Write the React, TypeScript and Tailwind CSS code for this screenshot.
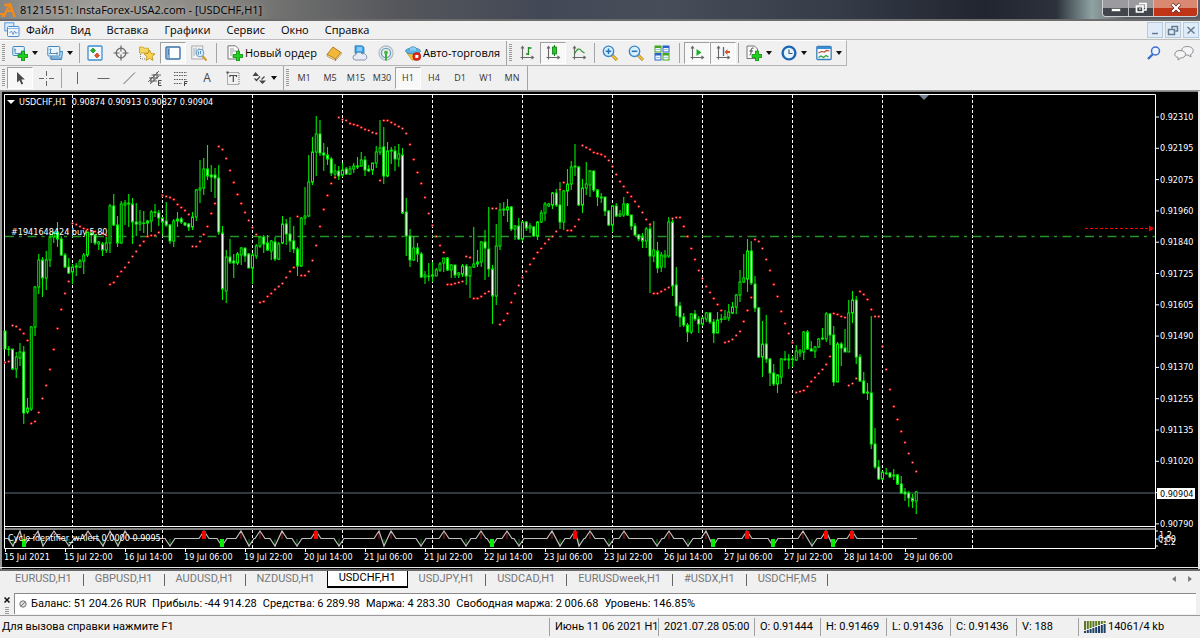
import React from "react";
import clsx from "clsx";

// [high, open, close, low] of every hourly bar, in chart units (y grows downwards)
const BARS: number[][] = [
  [331, 331, 349, 349], [346, 349, 349, 356], [349, 349, 369, 370], [352, 369, 357, 378],
  [343, 358, 352, 366], [346, 352, 413, 424], [398, 412, 408, 414], [326, 409, 327, 411],
  [286, 327, 287, 336], [254, 287, 260, 294], [257, 260, 278, 297], [251, 278, 260, 290],
  [233, 260, 237, 267], [231, 237, 233, 243], [222, 232, 239, 247], [236, 239, 255, 256],
  [253, 255, 267, 268], [258, 267, 273, 274], [264, 272, 267, 284], [263, 267, 266, 276],
  [259, 267, 261, 268], [253, 261, 255, 274], [232, 255, 232, 257], [230, 232, 235, 243],
  [234, 235, 243, 245], [241, 244, 242, 250], [242, 244, 250, 256], [237, 250, 243, 253],
  [204, 243, 206, 253], [194, 206, 225, 226], [216, 225, 243, 247], [201, 243, 204, 244],
  [200, 205, 203, 225], [194, 203, 204, 227], [198, 204, 222, 244], [203, 222, 224, 236],
  [210, 224, 222, 231], [211, 223, 223, 233], [220, 223, 221, 237], [210, 221, 212, 232],
  [204, 212, 212, 217], [210, 213, 218, 226], [217, 218, 222, 235], [202, 221, 225, 227],
  [224, 225, 241, 244], [219, 241, 221, 247], [212, 221, 219, 227], [217, 219, 222, 224],
  [222, 223, 225, 226], [223, 224, 227, 231], [212, 227, 217, 230], [189, 217, 190, 221],
  [160, 190, 188, 203], [158, 188, 169, 195], [145, 169, 176, 180], [165, 175, 177, 192],
  [168, 175, 178, 198], [165, 178, 232, 235], [226, 233, 289, 300], [250, 291, 257, 303],
  [239, 257, 262, 264], [254, 261, 263, 278], [252, 263, 254, 265], [247, 255, 248, 265],
  [248, 248, 256, 262], [253, 254, 268, 268], [253, 268, 255, 284], [244, 256, 246, 259],
  [237, 246, 237, 248], [235, 237, 244, 253], [235, 243, 250, 251], [240, 251, 241, 260],
  [237, 242, 259, 261], [242, 259, 244, 260], [216, 243, 224, 244], [219, 224, 234, 245],
  [217, 234, 241, 252], [226, 241, 249, 253], [247, 249, 266, 276], [217, 266, 218, 267],
  [187, 218, 216, 225], [155, 216, 182, 217], [137, 182, 152, 185], [116, 152, 134, 176],
  [120, 134, 153, 156], [143, 153, 155, 171], [147, 155, 159, 165], [157, 159, 173, 176],
  [164, 174, 171, 177], [166, 171, 176, 180], [163, 175, 170, 177], [167, 169, 174, 175],
  [166, 174, 169, 175], [163, 169, 166, 173], [157, 167, 166, 169], [152, 166, 160, 167],
  [156, 160, 170, 176], [165, 169, 171, 172], [163, 170, 163, 175], [146, 163, 152, 168],
  [120, 152, 148, 155], [127, 147, 176, 184], [142, 176, 151, 177], [147, 151, 150, 164],
  [146, 151, 159, 171], [144, 159, 154, 167], [148, 155, 213, 214], [198, 212, 236, 256],
  [229, 236, 260, 267], [236, 260, 248, 261], [243, 248, 254, 262], [252, 254, 277, 278],
  [271, 277, 275, 284], [263, 276, 276, 281], [262, 276, 275, 282], [268, 276, 270, 276],
  [262, 270, 264, 272], [258, 263, 258, 272], [257, 258, 270, 271], [264, 270, 265, 278],
  [265, 265, 275, 278], [272, 275, 273, 278], [264, 274, 266, 277], [264, 266, 276, 285],
  [267, 276, 267, 298], [227, 267, 264, 268], [250, 264, 262, 267], [241, 262, 242, 267],
  [230, 242, 248, 280], [207, 249, 269, 277], [265, 269, 296, 324], [224, 296, 246, 305],
  [203, 246, 210, 250], [202, 210, 209, 216], [199, 210, 207, 222], [206, 207, 229, 231],
  [225, 229, 226, 240], [218, 226, 239, 240], [221, 239, 222, 241], [221, 222, 228, 231],
  [223, 228, 226, 233], [226, 227, 236, 237], [221, 236, 222, 240], [210, 222, 213, 223],
  [202, 213, 204, 221], [203, 206, 204, 207], [192, 205, 193, 209], [189, 193, 205, 207],
  [182, 205, 222, 229], [190, 222, 191, 230], [169, 191, 184, 206], [161, 184, 167, 190],
  [144, 167, 166, 176], [166, 167, 205, 206], [179, 205, 188, 213], [162, 188, 184, 195],
  [170, 185, 171, 197], [171, 171, 190, 192], [189, 190, 197, 206], [193, 198, 197, 203],
  [197, 197, 211, 216], [210, 211, 225, 226], [205, 225, 206, 232], [203, 206, 216, 217],
  [210, 216, 214, 217], [197, 215, 204, 217], [203, 204, 215, 216], [215, 215, 226, 230],
  [223, 226, 235, 236], [234, 235, 239, 241], [233, 237, 241, 248], [227, 241, 229, 248],
  [223, 229, 256, 293], [221, 256, 250, 262], [242, 251, 268, 273], [252, 267, 255, 272],
  [250, 257, 255, 268], [217, 256, 222, 258], [218, 222, 286, 296], [267, 285, 306, 316],
  [302, 306, 317, 327], [313, 317, 325, 327], [323, 325, 332, 342], [313, 332, 314, 334],
  [310, 314, 319, 321], [316, 319, 324, 333], [317, 324, 318, 326], [312, 319, 313, 322],
  [312, 313, 322, 324], [319, 322, 333, 343], [312, 333, 320, 333], [314, 319, 319, 323],
  [310, 319, 317, 320], [304, 318, 312, 321], [302, 313, 307, 314], [294, 307, 295, 314],
  [270, 295, 282, 302], [254, 282, 278, 283], [239, 279, 251, 292], [241, 251, 283, 285],
  [276, 284, 308, 312], [307, 308, 357, 358], [321, 357, 344, 377], [315, 344, 359, 363],
  [358, 359, 373, 386], [364, 373, 384, 386], [374, 384, 375, 393], [358, 377, 359, 384],
  [351, 359, 359, 361], [354, 360, 359, 369], [356, 359, 359, 367], [345, 360, 351, 361],
  [349, 353, 351, 357], [331, 352, 332, 360], [330, 332, 349, 350], [341, 349, 351, 351],
  [346, 351, 347, 358], [338, 347, 339, 348], [328, 339, 338, 340], [312, 339, 314, 342],
  [313, 314, 335, 345], [326, 335, 382, 386], [342, 382, 344, 382], [342, 344, 348, 366],
  [329, 348, 352, 352], [300, 352, 313, 352], [291, 313, 300, 323], [296, 300, 357, 364],
  [354, 357, 381, 382], [372, 381, 393, 394], [383, 392, 393, 400], [316, 393, 444, 449],
  [428, 444, 467, 469], [460, 467, 479, 480], [471, 479, 472, 480], [468, 473, 473, 475],
  [472, 473, 477, 478], [469, 476, 475, 480], [474, 475, 484, 485], [476, 484, 493, 494],
  [488, 492, 494, 501], [491, 493, 498, 507], [494, 498, 501, 508], [491, 501, 492, 514],
];

// Parabolic SAR, one dot for each bar
const SAR = [
  362, 361, 325, 326, 329, 333, 340, 423, 421, 412, 398, 385, 369, 349, 328, 309, 293, 281,
  223, 224, 226, 228, 229, 231, 231, 232, 233, 235, 284, 282, 276, 271, 267, 262, 256, 251,
  245, 241, 236, 235, 235, 232, 195, 196, 197, 199, 204, 207, 210, 214, 246, 246, 241, 234,
  226, 213, 203, 146, 149, 158, 170, 182, 194, 203, 212, 220, 227, 234, 302, 301, 296, 293,
  289, 286, 283, 277, 271, 267, 216, 275, 275, 271, 260, 245, 226, 209, 195, 183, 177, 117,
  119, 120, 123, 124, 125, 127, 129, 130, 132, 133, 180, 120, 120, 122, 124, 126, 128, 133,
  144, 159, 172, 183, 197, 213, 225, 236, 245, 252, 284, 284, 283, 282, 281, 256, 257, 298,
  298, 296, 293, 291, 208, 208, 324, 320, 313, 302, 293, 285, 277, 271, 264, 258, 252, 248,
  243, 239, 236, 231, 189, 182, 230, 230, 226, 219, 145, 147, 149, 152, 153, 154, 156, 160,
  166, 174, 181, 186, 192, 196, 201, 206, 212, 219, 224, 293, 293, 291, 289, 287, 218, 217,
  217, 226, 236, 248, 259, 270, 278, 286, 292, 298, 304, 310, 342, 341, 339, 335, 331, 321,
  310, 297, 239, 241, 248, 259, 270, 284, 296, 311, 323, 333, 342, 392, 391, 390, 386, 381,
  377, 373, 369, 364, 356, 313, 314, 316, 317, 385, 383, 378, 291, 294, 299, 309, 316, 316,
  346, 369, 389, 406, 419, 431, 442, 453, 462, 471,
];

// Cycle identifier peaks: x, direction (1 up, -1 down), strong signal
const CYCLES: [number, number, boolean][] = [
  [13, -1, false], [20, 1, false], [24, -1, true], [38, 1, false], [43, -1, false],
  [54, 1, false], [69, -1, false], [88, 1, false], [103, -1, false], [110, 1, false],
  [118, -1, false], [125, 1, false], [170, -1, false], [204, 1, true], [222, -1, true],
  [241, 1, false], [249, -1, false], [260, 1, false], [275, -1, false], [282, 1, false],
  [297, -1, false], [316, 1, true], [339, -1, false], [379, 1, false], [384, -1, false],
  [391, 1, false], [421, -1, false], [444, 1, false], [466, -1, false], [481, 1, false],
  [492, -1, true], [507, 1, false], [519, -1, false], [552, 1, false], [560, -1, false],
  [575, 1, true], [579, -1, false], [590, 1, false], [609, -1, false], [624, 1, false],
  [657, -1, false], [669, 1, false], [688, -1, false], [706, 1, false], [713, -1, true],
  [747, 1, true], [773, -1, true], [803, 1, false], [812, -1, false], [826, 1, true],
  [833, -1, true], [852, 1, true],
];

const PRICES = [
  "0.92310", "0.92195", "0.92075", "0.91960", "0.91840", "0.91725", "0.91605",
  "0.91490", "0.91370", "0.91255", "0.91135", "0.91020", "", "0.90790",
];

const TIMES = [
  "15 Jul 2021", "15 Jul 22:00", "16 Jul 14:00", "19 Jul 06:00", "19 Jul 22:00", "20 Jul 14:00",
  "21 Jul 06:00", "21 Jul 22:00", "22 Jul 14:00", "23 Jul 06:00", "23 Jul 22:00", "26 Jul 14:00",
  "27 Jul 06:00", "27 Jul 22:00", "28 Jul 14:00", "29 Jul 06:00",
];

const MENU = ["Файл", "Вид", "Вставка", "Графики", "Сервис", "Окно", "Справка"];
const PERIODS = ["M1", "M5", "M15", "M30", "H1", "H4", "D1", "W1", "MN"];
const TABS = [
  "EURUSD,H1", "GBPUSD,H1", "AUDUSD,H1", "NZDUSD,H1", "USDCHF,H1", "USDJPY,H1",
  "USDCAD,H1", "EURUSDweek,H1", "#USDX,H1", "USDCHF,M5",
];

const barX = (i: number) => 5 + i * 3.75;

/* ---------- icons ---------- */

const Icon = ({ children, size = "size-4" }: { children: React.ReactNode; size?: string }) => (
  <svg viewBox="0 0 16 16" className={clsx(size, "shrink-0")} fill="none" aria-hidden="true">
    {children}
  </svg>
);

const Plus = () => (
  <path d="M9.500 6h3v3.500h3.500v3h-3.500V16h-3v-3.500H6v-3h3.500z" fill="#1fd01f" stroke="#0c8a0c" strokeWidth=".8" />
);

const NewChartIcon = () => (
  <Icon>
    <rect x=".8" y="1.500" width="11.500" height="9" rx="1" fill="#eaf4fc" stroke="#3e86bd" />
    <path d="M3 3.500v5M2 5h2M3 8.500h7M9 7v2.500" stroke="#5a8fb8" />
    <Plus />
  </Icon>
);
const ProfilesIcon = () => (
  <Icon>
    <path d="M4 11v3.500h10.500l1-8H13" fill="#b9dcf2" stroke="#3e86bd" />
    <rect x=".8" y="1.500" width="12" height="9.500" rx="1" fill="#eaf4fc" stroke="#3e86bd" />
    <path d="M3.500 3.500v5M2.500 4.500h2M2 8.500h9M10 7v3" stroke="#5a8fb8" />
    <path d="M2.500 13h12" stroke="#3e86bd" />
  </Icon>
);
const MarketWatchIcon = () => (
  <Icon>
    <rect x="1" y="1" width="14" height="14" rx="1" fill="#f3f9fe" stroke="#3d8fd1" strokeWidth="1.300" />
    <path d="M6 3l2.500 2.500L6 8 3.500 5.500z" fill="#22b422" stroke="#0b7a0b" strokeWidth=".6" />
    <path d="M10 8l2.500 2.500L10 13l-2.500-2.500z" fill="#e8532a" stroke="#a82c10" strokeWidth=".6" />
  </Icon>
);
const TargetIcon = () => (
  <Icon>
    <circle cx="8" cy="8" r="4.800" stroke="#666" strokeWidth="1.300" />
    <path d="M8 .5v6M8 9.500v6M.5 8h6M9.500 8h6" stroke="#666" strokeWidth="1.200" />
  </Icon>
);
const FolderStarIcon = () => (
  <Icon>
    <path d="M.5 2h3.500l1 1.200h4.500V8h-9z" fill="#f5d766" stroke="#c79a1c" strokeWidth=".8" />
    <path d="M1.500 9v5M3 14h3" stroke="#777" strokeDasharray="1 1" />
    <path d="M10.500 5l1.600 3.500 3.900.4-2.900 2.600.9 3.900-3.500-2-3.500 2 .9-3.900L5 8.900l3.900-.4z" fill="#fbd44c" stroke="#b98a10" strokeWidth=".8" />
  </Icon>
);
const NavigatorIcon = () => (
  <Icon>
    <rect x="1" y="2" width="14" height="12" rx="1" fill="#fbfdff" stroke="#3a6fa5" strokeWidth="1.400" />
    <rect x="2" y="3" width="3" height="10" fill="#7db7e6" />
    <path d="M3 5h1M3 7h1M3 9h1" stroke="#1d4f80" />
  </Icon>
);
const TesterIcon = () => (
  <Icon>
    <rect x=".8" y="1" width="11" height="13" fill="#f3f3f3" stroke="#999" strokeWidth=".8" />
    <path d="M3 3v8M5 2.500v7M8 3v3" stroke="#88a4bd" strokeWidth=".8" />
    <path d="M11.500 11l4 4.500" stroke="#d49a1e" strokeWidth="2" />
    <circle cx="9" cy="8" r="3.800" fill="#d3ebfb" stroke="#6a9bc2" />
    <path d="M7.500 6.500v3M9.500 6v3" stroke="#4678a4" strokeWidth=".8" />
  </Icon>
);
const NewOrderIcon = () => (
  <Icon>
    <path d="M1 .8h7.500l3 3V14H1z" fill="#fafafa" stroke="#777" />
    <path d="M3 4h4M3 6h6M3 8h3M3 10h2" stroke="#888" strokeWidth=".8" />
    <Plus />
  </Icon>
);
const BookIcon = () => (
  <Icon>
    <path d="M1 9.500L7 2l8 5.500-5.500 6.500z" fill="#f0b93a" stroke="#a46a0c" strokeWidth=".8" />
    <path d="M1 9.500l.5 2 8 4V14z M9.500 14v1.500L15 9.500v-2z" fill="#fff1c4" stroke="#a46a0c" strokeWidth=".6" />
  </Icon>
);
const CloudIcon = () => (
  <Icon>
    <path d="M3 .8h7l2 1.500v6H3z" fill="#3aa5ec" stroke="#1c74b4" strokeWidth=".7" />
    <path d="M5 3h5M5 5h5" stroke="#d8efff" />
    <path d="M3.500 15a2.500 2.500 0 010-5 3.500 3.500 0 016.500-1 2.800 2.800 0 013 6z" fill="#e6ebf4" stroke="#7d8aa5" strokeWidth=".9" />
  </Icon>
);
const SignalIcon = () => (
  <Icon>
    <circle cx="8" cy="8" r="7" stroke="#b0c0c8" strokeWidth="1.300" />
    <circle cx="8" cy="8" r="4.600" stroke="#6aa0b4" strokeWidth="1.400" />
    <circle cx="8" cy="7.500" r="2" fill="#4ab84a" />
    <path d="M7 8.500h2v7H7z" fill="#3cae3c" />
  </Icon>
);
const AutoTradingIcon = () => (
  <Icon>
    <path d="M2 8l5 7h4l3.500-7z" fill="#f0c43e" stroke="#b78413" strokeWidth=".7" />
    <ellipse cx="8" cy="6" rx="7.500" ry="3" fill="#5fb4e4" stroke="#2d82b5" strokeWidth=".7" />
    <path d="M4 5.500C4 .5 12 .5 12 5.500" fill="#8bd0f2" stroke="#2d82b5" strokeWidth=".7" />
    <circle cx="11.800" cy="11.500" r="4" fill="#e02818" stroke="#a51409" strokeWidth=".6" />
    <rect x="10.300" y="10" width="3" height="3" fill="#fff" />
  </Icon>
);

const Axes = () => (
  <path d="M3.500 1.500v13M1.500 12.500h13M2 3.500l1.500-2 1.500 2M12.500 11l2 1.500-2 1.500" stroke="#6a6a6a" strokeWidth="1.100" />
);
const BarsIcon = () => (
  <Icon><Axes /><path d="M9.500 2v8M9.500 3h3M7 9h2.500" stroke="#1f8a1f" strokeWidth="1.300" /></Icon>
);
const CandlesIcon = () => (
  <Icon><Axes /><path d="M9.500 0v11" stroke="#0b7d0b" /><rect x="7.500" y="2" width="4" height="7" fill="#27c827" stroke="#0b7d0b" strokeWidth=".8" /></Icon>
);
const LineIcon = () => (
  <Icon><Axes /><path d="M3.500 9C6 3 9 3 10.500 6l3 2" stroke="#2f9a2f" strokeWidth="1.100" /></Icon>
);
const Magnifier = ({ plus }: { plus?: boolean }) => (
  <Icon>
    <path d="M10 10l5 5" stroke="#a8780d" strokeWidth="3" />
    <path d="M10 10l5 5" stroke="#f4cf45" strokeWidth="1.600" />
    <circle cx="6.500" cy="6.300" r="5.200" fill="#d9f0fe" stroke="#3b86c9" strokeWidth="1.400" />
    <path d="M3.700 6.300h5.600" stroke="#2472b8" strokeWidth="1.500" />
    {plus && <path d="M6.500 3.500v5.600" stroke="#2472b8" strokeWidth="1.500" />}
  </Icon>
);
const TileIcon = () => (
  <Icon>
    <path d="M.5.5h7v7h-7zM8.500 8h7v7.500h-7z" fill="#44a81b" />
    <path d="M8.500.5h7v7h-7zM.5 8h7v7.500h-7z" fill="#2a64c9" />
    <path d="M1.500 3h5v3.500h-5zM9.500 3h5v3.500h-5zM1.500 10.500h5v4h-5zM9.500 10.500h5v4h-5z" fill="#f2f8ff" />
    <path d="M2 4.500h4M10 4.500h4M2 12.500h4M10 12.500h4" stroke="#9fc3e8" />
  </Icon>
);
const ScrollIcon = () => (
  <Icon><Axes /><path d="M7.500 4v7l5-3.500z" fill="#1fae2b" /></Icon>
);
const ShiftIcon = () => (
  <Icon><Axes /><path d="M8.500 2v9" stroke="#2f6da3" strokeWidth="1.300" /><path d="M9.500 7l3-3v2H15v2h-2.500v2z" fill="#d4552b" /></Icon>
);
const IndicatorIcon = () => (
  <Icon>
    <path d="M1 1h7.500l3 3v9.500H1z" fill="#fafafa" stroke="#777" />
    <path d="M7.500 3C5 2.500 5 5 5 7s0 3-1.500 3M3.500 6H7" stroke="#444" />
    <Plus />
  </Icon>
);
const ClockIcon = () => (
  <Icon>
    <circle cx="8" cy="8" r="6.400" fill="#e8f4fd" stroke="#1d66b5" strokeWidth="2.400" />
    <path d="M8 4.500V8.500h3.500" stroke="#38597a" strokeWidth="1.100" />
  </Icon>
);
const TemplateIcon = () => (
  <Icon>
    <rect x=".8" y="1.500" width="14.400" height="13" rx="1" fill="#f6fafd" stroke="#3a7fbd" strokeWidth="1.300" />
    <path d="M1 3h14" stroke="#3a8fd6" strokeWidth="2" />
    <path d="M2.500 8l3-1.500 3 .5 2-1.500 3 .5" stroke="#c4472a" strokeWidth="1.200" />
    <path d="M2.500 12.500l2.500-1.500 2.500 1.500 2.500-2 2.500 1.500" stroke="#2c9c3a" strokeWidth="1.200" />
  </Icon>
);

const CursorIcon = () => (
  <Icon><path d="M5 2v10.500l2.500-2.300 1.900 4.300 1.800-.8-1.900-4.100h3.500z" fill="#4a4a4a" /></Icon>
);
const CrosshairIcon = () => (
  <Icon><path d="M8.500 1v5M8.500 11v5M1 8.500h5M11 8.500h5M8 8.500h1" stroke="#666" /></Icon>
);
const VLineIcon = () => <Icon><path d="M8.500 2v12" stroke="#666" /></Icon>;
const HLineIcon = () => <Icon><path d="M2.500 8.500h12" stroke="#666" /></Icon>;
const TrendIcon = () => <Icon><path d="M2.500 14L14 2.500" stroke="#666" /></Icon>;
const ChannelIcon = () => (
  <Icon>
    <path d="M1 12L12 1M3 14l9-8M2 8h9M4.500 5H14M3 11h7M4 7v6M7 4v7M10 2v6" stroke="#555" strokeWidth=".9" />
    <path d="M14.500 10.500h-3v5h3M11.500 13h2.500" stroke="#444" />
  </Icon>
);
const FiboIcon = () => (
  <Icon>
    <path d="M1 2.500h13M1 5.500h13M1 9.500h13M1 13.500h8" stroke="#555" strokeDasharray="1.500 1" />
    <path d="M14.500 11.500h-3v4.500M11.500 13.500h2.500" stroke="#444" />
  </Icon>
);
const LabelIcon = () => (
  <Icon>
    <rect x="2.500" y="2.500" width="11.500" height="12" stroke="#666" strokeDasharray="1 1" />
    <path d="M1.500 1.500h2v2h-2z" fill="#444" />
    <path d="M5 5.500h6.500M8.300 5.500V12M5 5v2M11.500 5v2" stroke="#4a4a4a" strokeWidth="1.200" />
  </Icon>
);
const ArrowsIcon = () => (
  <Icon>
    <path d="M4.500 2L8 6H1.500z M11.500 14L8 10.500h7z" fill="#444" />
    <path d="M3.500 8.500l2 2 3.500-4M10.500 9.500l3-3" stroke="#444" strokeWidth="1.200" />
  </Icon>
);

const Caret = () => (
  <svg viewBox="0 0 6 4" className="h-1 w-1.5 shrink-0" aria-hidden="true">
    <path d="M0 0h6L3 4z" fill="#111" />
  </svg>
);

/* ---------- toolbar parts ---------- */

type ToolProps = {
  label: string;
  pressed?: boolean;
  drop?: boolean;
  children: React.ReactNode;
};

const Tool = ({ label, pressed, drop, children }: ToolProps) => (
  <button
    type="button"
    aria-label={label}
    aria-pressed={pressed}
    className={clsx(
      "flex h-[22px] shrink-0 items-center justify-center border",
      drop ? "w-[35px] gap-1" : "w-[26px]",
      pressed ? "border-[#a0a0a0] border-r-white border-b-white bg-[#f8f8f8]" : "border-transparent"
    )}
  >
    {children}
    {drop && <Caret />}
  </button>
);

const Sep = () => <div className="mx-0.5 h-5 w-px shrink-0 bg-[#a5a5a5]" />;
const Grip = () => (
  <div className="mx-0.5 h-[18px] w-[3px] shrink-0 bg-[repeating-linear-gradient(to_bottom,#9a9a9a_0_1px,#f0f0f0_1px_2px)]" />
);

/* ---------- chart ---------- */

const cyclePath = () => {
  let d = "M5 538.500";
  CYCLES.forEach(([x, dir], i) => {
    const prev = i ? CYCLES[i - 1][0] : 0;
    const next = CYCLES[i + 1] ? CYCLES[i + 1][0] : 2000;
    if (x - prev > 9) d += `L${x - 5} 538.500`;
    d += `L${x} ${538.5 - dir * 7.5}`;
    if (next - x > 9) d += `L${x + 5} 538.500`;
  });
  return d + "L917 538.500";
};

const Chart = () => (
  <svg
    viewBox="0 91 1200 478"
    className="block w-full bg-black font-['DejaVu_Sans_Condensed','DejaVu_Sans',sans-serif] text-[9px]"
    role="img"
    aria-label="USDCHF,H1"
  >
    <rect x="0" y="91" width="1200" height="1" fill="#808080" />
    <rect x="0" y="91" width="2" height="478" fill="#9a9a9a" />
    <rect x="1198" y="91" width="2" height="478" fill="#e8e8e8" />

    {/* day separators */}
    {Array.from({ length: 11 }, (_, i) => (
      <path key={i} d={`M${72.5 + i * 90} 95V526M${72.5 + i * 90} 530V548`} stroke="#fff" strokeDasharray="3 2" />
    ))}

    {/* frames of the two panes */}
    <path d="M4.500 548.500V94.500H1155.500V548.500zM4.500 526.500H1155.500M4.500 529H1155.500" stroke="#fff" fill="none" />
    <path d="M919 95h10l-5 5z" fill="#708090" />

    {/* current price and open order */}
    <path d="M5 493H1155" stroke="#5f6f7e" />
    <path d="M5 236.500H1155" stroke="#249424" strokeWidth="1.300" strokeDasharray="9 5 3 5.500" />
    <path d="M1085 228.500H1150" stroke="#f00" strokeDasharray="3 2" />
    <path d="M1149 225.500l5 3-5 3z" fill="#f00" />

    {BARS.map(([high, open, close, low], i) => (
      <g key={i} stroke="#00f000">
        <path d={`M${barX(i)} ${high}V${low}`} strokeWidth="1.100" />
        <rect
          x={barX(i) - 1}
          y={Math.min(open, close)}
          width="2"
          height={Math.max(Math.abs(close - open), 0.5)}
          fill={close > open ? "#fff" : "#000"}
        />
      </g>
    ))}
    {SAR.map((y, i) => (
      <g key={i}>
        <circle cx={barX(i)} cy={y + 0.5} r="1.300" fill="#f01414" />
        <circle cx={barX(i)} cy={y + 0.5} r=".6" fill="#ffc0c0" />
      </g>
    ))}

    {/* cycle identifier */}
    {CYCLES.map(([x, dir, strong], i) => (
      <rect
        key={i}
        x={strong ? x - 2 : x - 0.5}
        y={dir > 0 ? 531 : 539}
        width={strong ? 4 : 1}
        height="8"
        fill={dir > 0 ? (strong ? "#f00" : "#a02020") : strong ? "#00f000" : "#0a7a0a"}
      />
    ))}
    <path d={cyclePath()} stroke="#c0c0c0" strokeWidth="1.200" fill="none" />
    {CYCLES.filter(([, , strong]) => strong).map(([x, dir]) => (
      <rect key={x} x={x - 2} y={dir > 0 ? 531 : 539} width="4" height="8" fill={dir > 0 ? "#f00" : "#00f000"} />
    ))}

    <path d="M7 100h8l-4 4z" fill="#fff" />
    <g fill="#fff">
      <text x="19" y="105">USDCHF,H1&nbsp; 0.90874 0.90913 0.90827 0.90904</text>
      <text x="11" y="235">#1941648424 buy 5.80</text>
      <text x="8" y="541">Cycle identifier_wAlert 0.0000 0.9095</text>
      {PRICES.map((price, i) => (
        <g key={i}>
          <path d={`M1156 ${117 + i * 31.3}h3`} stroke="#fff" />
          <text x="1160" y={120 + i * 31.3}>{price}</text>
        </g>
      ))}
      {TIMES.map((time, i) => (
        <g key={time}>
          <path d={`M${5.5 + i * 60} 549v3`} stroke="#fff" />
          <text x={4 + i * 60} y="560">{time}</text>
        </g>
      ))}
      <path d="M1156 531h2M1156 539h2M1156 546h2" stroke="#fff" />
      <text x="1159" y="538">1.2</text>
      <text x="1158" y="542">0.00</text>
      <text x="1160" y="545">-1.2</text>
    </g>
    <rect x="1157" y="488" width="38" height="11" fill="#fff" />
    <text x="1160" y="497" fill="#000">0.90904</text>
    <rect x="0" y="567" width="1200" height="1" fill="#e8e8e8" />
  </svg>
);

/* ---------- window parts ---------- */

const TitleBar = () => (
  <header className="flex h-[21px] items-start border-b-2 border-[#6c6c6c] bg-[linear-gradient(90deg,#858583_0%,#9f9d99_8%,#8d8a84_17%,#6e6f6e_24%,#55575c_33%,#424855_45%,#474d59_55%,#353b47_70%,#20252f_82%,#2c313b_88%,#8fa3a3_91%,#5a5d66_94%,#5a5d66_100%)] pr-0.5">
    <svg viewBox="0 0 16 18" className="h-[18px] w-4 shrink-0" aria-hidden="true">
      <path d="M1 17h4l2-5h5l1 5h3L11 3 4 4l1 3 3-1-4 7H0v2h2z" fill="#ef8a1d" />
      <path d="M8 9.500l1.500-3 1 3z" fill="#8b8985" />
    </svg>
    <h1 className="flex-1 pl-1 text-[11px] leading-[19px] text-black [text-shadow:0_0_6px_#fff8]">
      81215151: InstaForex-USA2.com - [USDCHF,H1]
    </h1>
    <div className="flex h-[17px] overflow-hidden rounded-b border border-t-0 border-[#d0d0d0] text-white">
      <button type="button" aria-label="Свернуть" className="flex w-[26px] items-center justify-center border-r border-[#c0c0c0] bg-linear-to-b from-[#9b9b9f] from-50% to-[#43454c] to-50%">
        <svg viewBox="0 0 12 12" className="size-3"><path d="M1.500 6.500h9v3h-9z" fill="#fff" stroke="#444" strokeWidth=".6" /></svg>
      </button>
      <button type="button" aria-label="Восстановить" className="flex w-[25px] items-center justify-center border-r border-[#c0c0c0] bg-linear-to-b from-[#9b9b9f] from-50% to-[#43454c] to-50%">
        <svg viewBox="0 0 12 12" className="size-3" fill="none"><path d="M4 1.500h7v6.500H9M1.500 4H8v6H1.500z" stroke="#fff" strokeWidth="1.700" /><path d="M4 6.500h2v1H4z" fill="#fff" /></svg>
      </button>
      <button type="button" aria-label="Закрыть" className="flex w-[43px] items-center justify-center bg-linear-to-b from-[#d98872] from-50% to-[#c03418] to-50%">
        <svg viewBox="0 0 12 12" className="size-3"><path d="M2 2l8 8M10 2l-8 8" stroke="#5a2014" strokeWidth="3.500" /><path d="M2.200 2.200l7.600 7.600M9.800 2.200L2.200 9.800" stroke="#fff" strokeWidth="2.300" /></svg>
      </button>
    </div>
  </header>
);

const MdiButton = ({ label, d }: { label: string; d: string }) => (
  <button type="button" aria-label={label} className="flex h-4 w-4 items-center justify-center border border-[#b5cbe0] bg-[#dfebf7]">
    <svg viewBox="0 0 12 12" className="size-3" fill="none"><path d={d} stroke="#667b90" strokeWidth="1.500" /></svg>
  </button>
);

const MenuBar = () => (
  <nav className="flex h-[19px] items-center border-b border-[#bdbdbd] bg-[#f0f0f0] pr-px pl-1 text-[11px]">
    <Icon>
      <rect x=".8" y=".8" width="9" height="8" fill="#dcebfb" stroke="#5b97d8" />
      <rect x="3.500" y="4.500" width="11.500" height="10" rx="1" fill="#eff6fe" stroke="#4c8ad0" />
      <path d="M4 6.500h11" stroke="#8ab6e8" />
      <path d="M5.500 11l2-2 1.500 3.500L10.500 9l1.500 2.500 1.500-1.500" stroke="#4c7fc0" strokeWidth=".8" />
    </Icon>
    <div className="flex flex-1 gap-2 pl-0.5">
      {MENU.map((item) => (
        <button key={item} type="button" className="px-1">{item}</button>
      ))}
    </div>
    <div className="flex gap-0.5">
      <MdiButton label="Свернуть окно" d="M3 9.500h6" />
      <MdiButton label="Восстановить окно" d="M5 4.500V2.500h5.500v4.500H8.500M1.500 5.500h6v5h-6z" />
      <MdiButton label="Закрыть окно" d="M2.500 3l7 6.500M9.500 3l-7 6.500" />
    </div>
  </nav>
);

const MainToolbar = () => (
  <div className="flex h-[26px] items-center justify-between bg-[#f0f0f0]">
    <div className="flex h-full items-center border-t border-r border-b border-[#b4b4b4] border-t-white text-[11px]">
      <Grip />
      <Tool label="Новый график" drop><NewChartIcon /></Tool>
      <Tool label="Профили" drop><ProfilesIcon /></Tool>
      <Sep />
      <Tool label="Обзор рынка"><MarketWatchIcon /></Tool>
      <Tool label="Окно данных"><TargetIcon /></Tool>
      <Tool label="Навигатор"><FolderStarIcon /></Tool>
      <Tool label="Терминал" pressed><NavigatorIcon /></Tool>
      <Tool label="Тестер стратегий"><TesterIcon /></Tool>
      <div className="px-0.5"><Sep /></div>
      <button type="button" className="flex items-center gap-0.5 pr-1 pl-1.5"><NewOrderIcon />Новый ордер</button>
      <Tool label="MetaEditor"><BookIcon /></Tool>
      <Tool label="Облако"><CloudIcon /></Tool>
      <Tool label="Сигналы"><SignalIcon /></Tool>
      <button type="button" className="flex items-center gap-0.5 px-1.5"><AutoTradingIcon />Авто-торговля</button>
      <div className="h-full w-px bg-[#a5a5a5]" />
      <Grip />
      <Tool label="Бары"><BarsIcon /></Tool>
      <Tool label="Свечи" pressed><CandlesIcon /></Tool>
      <Tool label="Линия"><LineIcon /></Tool>
      <Sep />
      <Tool label="Увеличить"><Magnifier plus /></Tool>
      <Tool label="Уменьшить"><Magnifier /></Tool>
      <Tool label="Расположить окна"><TileIcon /></Tool>
      <div className="px-0.5"><Sep /></div>
      <Tool label="Автопрокрутка" pressed><ScrollIcon /></Tool>
      <Tool label="Сдвиг графика" pressed><ShiftIcon /></Tool>
      <Sep />
      <Tool label="Индикаторы" drop><IndicatorIcon /></Tool>
      <Tool label="Периоды" drop><ClockIcon /></Tool>
      <Tool label="Шаблоны" drop><TemplateIcon /></Tool>
    </div>
    <div className="flex gap-3 pr-1.5">
      <button type="button" aria-label="Поиск">
        <Icon><path d="M2 14l5-5" stroke="#3c6fd0" strokeWidth="2.400" /><circle cx="9.500" cy="6" r="4" fill="#eef4ff" stroke="#3c6fd0" strokeWidth="1.500" /></Icon>
      </button>
      <button type="button" aria-label="Чат">
        <svg viewBox="0 0 20 16" className="h-4 w-5" fill="#f5f5f5" stroke="#8a8a94">
          <path d="M13 1.500c4 0 6.200 2 6.200 4.200S17.500 9 16.500 9.500l.5 2.500-3-2C9 10.500 7.500 8 7.500 6S9 1.500 13 1.500z" />
          <path d="M6 5.500c3.500 0 5.500 1.500 5.500 3.700S9.500 13 6.500 13l-2.500 2 .2-2.500C2 12 .8 11 .8 9.200S2.500 5.500 6 5.500z" />
        </svg>
      </button>
    </div>
  </div>
);

const DrawToolbar = () => (
  <div className="flex h-[25px] items-center border-b border-[#9a9a9a] bg-[#f0f0f0]">
    <div className="flex h-full items-center pr-0.5">
      <Grip />
      <Tool label="Курсор" pressed><CursorIcon /></Tool>
      <Tool label="Перекрестие"><CrosshairIcon /></Tool>
      <Sep />
      <Tool label="Вертикальная линия"><VLineIcon /></Tool>
      <Tool label="Горизонтальная линия"><HLineIcon /></Tool>
      <Tool label="Трендовая линия"><TrendIcon /></Tool>
      <Tool label="Канал"><ChannelIcon /></Tool>
      <Tool label="Фибоначчи"><FiboIcon /></Tool>
      <Tool label="Текст"><span className="text-xs text-[#444]">A</span></Tool>
      <Tool label="Метка"><LabelIcon /></Tool>
      <Tool label="Стрелки" drop><ArrowsIcon /></Tool>
    </div>
    <div className="flex h-full items-center border-x border-[#a5a5a5] pr-0.5 text-[9px] text-[#333]">
      <Grip />
      {PERIODS.map((p) => (
        <Tool key={p} label={p} pressed={p === "H1"}>{p}</Tool>
      ))}
    </div>
  </div>
);

const Tabs = () => (
  <div className="flex h-[20px] items-start justify-between border-t-2 border-[#6a6a6a] bg-[#f0f0f0] px-1 font-[Roboto,sans-serif] text-[11px] text-[#777]">
    <div role="tablist" className="flex items-center">
      {TABS.map((tab) => {
        const active = tab === "USDCHF,H1";
        return (
          <button
            key={tab}
            type="button"
            role="tab"
            aria-selected={active}
            className={clsx(
              "flex items-center border-r px-[11px]",
              active ? "h-[17px] border-b-2 border-l border-black bg-white px-2.5 text-black" : "h-3",
              !active && (tab === "NZDUSD,H1" ? "border-transparent" : "border-[#666]")
            )}
          >
            {tab}
          </button>
        );
      })}
    </div>
    <div className="flex h-4 items-center gap-3 pr-1">
      <button type="button" aria-label="Влево"><svg viewBox="0 0 5 8" className="h-1.5 w-1"><path d="M5 0v8L0 4z" fill="#777" /></svg></button>
      <button type="button" aria-label="Вправо"><svg viewBox="0 0 5 8" className="h-1.5 w-1"><path d="M0 0v8l5-4z" fill="#777" /></svg></button>
    </div>
  </div>
);

const Terminal = () => (
  <section className="flex h-[27px] items-start gap-1 border-b border-[#9a9a9a] bg-[#f0f0f0] pt-1 pr-1 pl-[3px] font-[Roboto,sans-serif]">
    <div className="flex w-[7px] flex-col items-center gap-1 pt-1">
      <button type="button" aria-label="Закрыть терминал" className="flex">
        <svg viewBox="0 0 6 6" className="size-1.5"><path d="M.5.5l5 5M5.500.5l-5 5" stroke="#111" strokeWidth="1.500" /></svg>
      </button>
      <div className="h-2 w-1 bg-[repeating-linear-gradient(to_bottom,#9a9a9a_0_1px,#f0f0f0_1px_2px)]" />
    </div>
    <div className="flex h-[21px] flex-1 items-center gap-1 border-t border-l border-[#8a8a8a] bg-white pl-1 text-[11px] whitespace-nowrap">
      <svg viewBox="0 0 8 8" className="size-2" aria-hidden="true">
        <circle cx="4" cy="4" r="3.200" fill="#ddd" stroke="#777" /><path d="M2 6l4-4" stroke="#777" />
      </svg>
      <div className="flex gap-1.5">
        <span>Баланс: 51 204.26 RUR</span>
        <span>Прибыль: -44 914.28</span>
        <span>Средства: 6 289.98</span>
        <span>Маржа: 4 283.30</span>
        <span>Свободная маржа: 2 006.68</span>
        <span>Уровень: 146.85%</span>
      </div>
    </div>
  </section>
);

const StatusCell = ({ width, children }: { width: string; children: React.ReactNode }) => (
  <div className={clsx("flex h-[18px] shrink-0 items-center border-l border-[#a0a0a0] pl-[5px]", width)}>{children}</div>
);

const StatusBar = () => (
  <footer className="flex h-[22px] items-center bg-[#f0f0f0] font-[Roboto,sans-serif] text-[11px] whitespace-nowrap">
    <div className="flex-1 pl-0.5">Для вызова справки нажмите F1</div>
    <StatusCell width="w-[109px]">Июнь 11 06 2021 H1</StatusCell>
    <StatusCell width="w-[96px]">2021.07.28 05:00</StatusCell>
    <StatusCell width="w-[66px]">O: 0.91444</StatusCell>
    <StatusCell width="w-[66px]">H: 0.91469</StatusCell>
    <StatusCell width="w-[64px]">L: 0.91436</StatusCell>
    <StatusCell width="w-[66px]">C: 0.91436</StatusCell>
    <StatusCell width="w-[62px]">V: 188</StatusCell>
    <StatusCell width="w-[122px]">
      <svg viewBox="0 0 22 12" className="mr-0.5 h-3 w-[22px]" aria-hidden="true">
        {Array.from({ length: 8 }, (_, i) => (
          <g key={i}>
            <rect x={i * 2.8} y="0" width="2" height={9 - i} fill="#5f7a22" />
            <rect x={i * 2.8} y={10 - i} width="2" height={2 + i} fill="#1d3f66" />
          </g>
        ))}
      </svg>
      14061/4 kb
    </StatusCell>
  </footer>
);

const App = () => {
  return (
    <div className="flex w-full flex-col overflow-hidden bg-[#f0f0f0] font-['Open_Sans','Noto_Sans',sans-serif] text-black">
      <TitleBar />
      <MenuBar />
      <MainToolbar />
      <DrawToolbar />
      <main>
        <Chart />
      </main>
      <Tabs />
      <Terminal />
      <StatusBar />
    </div>
  );
};

export default App;
